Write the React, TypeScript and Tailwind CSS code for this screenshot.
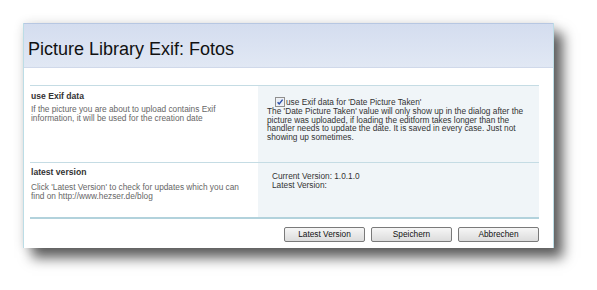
import type { ReactElement } from "react";

const font = "font-['Liberation_Sans',Arial,sans-serif]";

function CheckBox(): ReactElement {
  return (
    <svg width="10" height="10" viewBox="0 0 10 10" className="shrink-0">
      <rect x="0.5" y="0.5" width="9" height="9" fill="#f4f4f4" stroke="#8f8f8f" />
      <rect x="1.5" y="1.5" width="7" height="7" fill="#e9eef5" />
      <path d="M2.6 5.2 L4.2 7 L7.6 2.6" fill="none" stroke="#2a4ea8" strokeWidth="1.4" />
    </svg>
  );
}

function Button({ label }: { label: string }): ReactElement {
  return (
    <button
      type="button"
      className="h-[15px] w-[81px] rounded-[2px] border border-[#7a7a7a] bg-gradient-to-b from-[#f6f6f6] to-[#dcdcdc] text-[8.3px] leading-[13px] text-[#111]"
    >
      {label}
    </button>
  );
}

export default function App(): ReactElement {
  return (
    <div className={`h-[290px] w-[597px] bg-white pl-[23px] pt-[23px] ${font}`}>
      <div className="flex h-[225px] w-[531px] flex-col border-x border-[#bcdde6] bg-white shadow-[9px_10px_12px_rgba(0,0,0,0.62),0_0_10px_rgba(0,0,0,0.12)]">
        <div className="h-[45px] border-t border-b border-t-[#b7c7e2] border-b-[#d0d9ea] bg-gradient-to-b from-[#d4ddef] to-[#e1e8f4] pl-[4px] pt-[15px]">
          <h1 className="text-[18px] leading-[20px] text-[#111]">Picture Library Exif: Fotos</h1>
        </div>

        <div className="flex flex-1 flex-col pl-[6px] pr-[14px] pt-[17px]">
          <div className="border-t border-[#c5dce4]">
            <div className="flex h-[77px] border-b border-[#c5dce4]">
              <div className="w-[228px] pl-[1px] pt-[5px]">
                <div className="text-[8.6px] font-bold leading-[10px] text-[#333]">use Exif data</div>
                <p className="mt-[4px] text-[8.3px] leading-[9px] text-[#666]">
                  If the picture you are about to upload contains Exif
                  <br />
                  information, it will be used for the creation date
                </p>
              </div>
              <div className="flex-1 bg-[#f0f5f8] pl-[9px] pt-[11px] text-[8.3px] text-[#333]">
                <div className="flex items-center gap-[1px] pl-[8px] leading-[10px]">
                  <CheckBox />
                  <span>use Exif data for 'Date Picture Taken'</span>
                </div>
                <p className="leading-[8.6px]">
                  The 'Date Picture Taken' value will only show up in the dialog after the
                  <br />
                  picture was uploaded, if loading the editform takes longer than the
                  <br />
                  handler needs to update the date. It is saved in every case. Just not
                  <br />
                  showing up sometimes.
                </p>
              </div>
            </div>

            <div className="flex h-[56px] border-b-2 border-[#b2d2dc]">
              <div className="w-[228px] pl-[1px] pt-[4px]">
                <div className="text-[8.6px] font-bold leading-[10px] text-[#333]">latest version</div>
                <p className="mt-[6px] text-[8.3px] leading-[9px] text-[#666]">
                  Click 'Latest Version' to check for updates which you can
                  <br />
                  find on http://www.hezser.de/blog
                </p>
              </div>
              <div className="flex-1 bg-[#f0f5f8] pl-[14px] pt-[9px] text-[8.3px] leading-[9px] text-[#333]">
                <div>Current Version: 1.0.1.0</div>
                <div>Latest Version:</div>
              </div>
            </div>
          </div>

          <div className="mt-[8px] flex justify-end gap-[6px]">
            <Button label="Latest Version" />
            <Button label="Speichern" />
            <Button label="Abbrechen" />
          </div>
        </div>
      </div>
    </div>
  );
}
